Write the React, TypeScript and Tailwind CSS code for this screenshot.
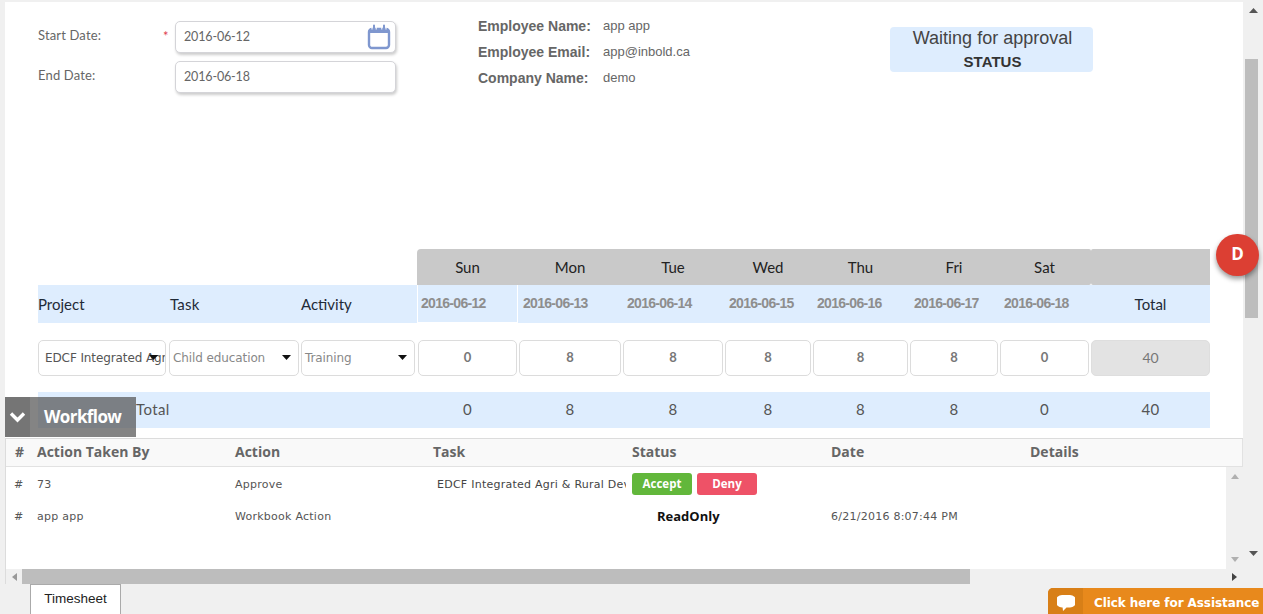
import React from "react";

const cols = "w-[1172px] grid grid-cols-[131px_132px_117px_101px_104px_102px_88px_97px_90px_91px_119px]";
const wfCols = "grid grid-cols-[31px_198px_198px_199px_199px_199px_196px]";
const days = ["Sun", "Mon", "Tue", "Wed", "Thu", "Fri", "Sat"];
const dates = ["2016-06-12", "2016-06-13", "2016-06-14", "2016-06-15", "2016-06-16", "2016-06-17", "2016-06-18"];
const hours = ["0", "8", "8", "8", "8", "8", "0"];

function Caret({ className = "" }: { className?: string }) {
  return (
    <svg width="9" height="5" viewBox="0 0 9 5" className={className}>
      <path d="M0 0h9L4.5 5z" fill="#111" />
    </svg>
  );
}

function Select({ label, dark, w }: { label: string; dark?: boolean; w: string }) {
  return (
    <div className={`${w} h-9 relative flex items-center bg-white border border-[#dcdcdc] rounded-[5px] overflow-hidden`}>
      <span className={`whitespace-nowrap text-[12px] tracking-[-0.1px] font-['DejaVu_Sans',sans-serif] ${dark ? "pl-[6px] text-[#555]" : "pl-[3px] text-[#888]"}`}>
        {label}
      </span>
      <Caret className="absolute right-[7px] top-[14px]" />
    </div>
  );
}

function Calendar() {
  return (
    <svg width="24" height="26" viewBox="0 0 24 26" className="absolute right-[4px] top-[2px]">
      <rect x="2" y="5" width="20" height="19" rx="3" fill="#fff" stroke="#7f97cf" strokeWidth="2.4" />
      <path d="M2 6.5a2 2 0 0 1 2-2h16a2 2 0 0 1 2 2V9H2z" fill="#7f97cf" />
      <path d="M7 1.5v6M17 1.5v6" stroke="#7f97cf" strokeWidth="2" strokeLinecap="round" />
      <path d="M5 2.5v3M9.2 2.5v3M14.8 2.5v3M19 2.5v3" stroke="#fff" strokeWidth="1" />
    </svg>
  );
}

function DateInput({ value, icon }: { value: string; icon?: boolean }) {
  return (
    <div className="w-[221px] h-8 relative flex items-center pl-2 bg-white border border-[#d4d4d8] rounded-[5px] shadow-[1px_2px_3px_rgba(0,0,0,0.2)] text-[12.5px] tracking-[-0.15px] text-[#666] font-['Lato',sans-serif]">
      {value}
      {icon && <Calendar />}
    </div>
  );
}

function Info({ label, value }: { label: string; value: string }) {
  return (
    <div className="flex items-center h-[26px]">
      <span className="w-[125px] text-[14px] font-bold text-[#666] font-['Liberation_Sans',sans-serif]">{label}</span>
      <span className="text-[13px] text-[#666] font-['Liberation_Sans',sans-serif]">{value}</span>
    </div>
  );
}

export default function App() {
  return (
    <div className="relative w-[1263px] h-[614px] overflow-hidden bg-[#f0f0f0] font-['Lato',sans-serif]">
      <div className="flex h-[584px]">
        {/* main white panel */}
        <div className="ml-[5px] mt-[2px] w-[1238px] flex flex-col bg-white">
          {/* top form */}
          <div className="h-[247px] flex pt-[13px] shrink-0">
            <div className="w-[473px] pl-[33px] pt-[6px] flex flex-col gap-2">
              <div className="flex items-center">
                <span className="w-[125px] pb-[2px] text-[13px] text-[#666] tracking-[0.15px]">Start Date:</span>
                <span className="w-[12px] text-[13px] text-[#e0404f]">*</span>
                <DateInput value="2016-06-12" icon />
              </div>
              <div className="flex items-center">
                <span className="w-[137px] pb-[2px] text-[13px] text-[#666] tracking-[0.15px]">End Date:</span>
                <DateInput value="2016-06-18" />
              </div>
            </div>
            <div className="w-[412px] flex flex-col -mt-[2px]">
              <Info label="Employee Name:" value="app app" />
              <Info label="Employee Email:" value="app@inbold.ca" />
              <Info label="Company Name:" value="demo" />
            </div>
            <div className="w-[203px] h-[45px] mt-[12px] pl-[2px] bg-[#deedfe] rounded-[4px] flex flex-col items-center font-['Liberation_Sans',sans-serif]">
              <span className="text-[18px] leading-[23px] text-[#444]">Waiting for approval</span>
              <span className="text-[15px] leading-[23px] font-bold text-[#333]">STATUS</span>
            </div>
          </div>

          {/* timesheet */}
          <div className="pl-[33px] shrink-0">
            <div className={`${cols} h-9 text-[15px] text-[#222]`}>
              <div className="col-span-3" />
              {days.map((d) => (
                <div key={d} className={`bg-[#c9c9c9] flex items-center justify-center ${d === "Sun" ? "rounded-tl-[4px] -ml-[1px] pr-[1px]" : "pr-[2px]"} ${d === "Sat" ? "rounded-r-[2px]" : ""}`}>
                  {d}
                </div>
              ))}
              <div className="bg-[#c9c9c9] rounded-l-[2px]" />
            </div>
            <div className={`${cols} h-[38px] bg-[#deedfe] text-[15px] text-[#1f2a37] items-center`}>
              <div>Project</div>
              <div className="pl-[1px] tracking-[0.2px]">Task</div>
              <div>Activity</div>
              {dates.map((d, i) => (
                <div key={d} className={`h-full flex items-center pb-[1px] text-[14px] font-bold text-[#8e8e8e] tracking-[-0.7px] font-['Liberation_Sans',sans-serif] ${i === 0 ? "pl-[3px] -ml-[1px] border border-t-0 border-white w-[101px]" : "pl-[4px]"}`}>
                  {d}
                </div>
              ))}
              <div className="text-center">Total</div>
            </div>
            <div className={`${cols} h-9 mt-[17px] text-[13px]`}>
              <Select label="EDCF Integrated Agri & Rural Dev" dark w="w-[128px]" />
              <Select label="Child education" w="w-[130px]" />
              <Select label="Training" w="w-[114px]" />
              {hours.map((h, i) => (
                <div key={i} className="mr-[2px] flex items-center justify-center pb-[1px] bg-white border border-[#dcdcdc] rounded-[5px] text-[#777] font-bold">
                  {h}
                </div>
              ))}
              <div className="flex items-center justify-center pb-[1px] bg-[#e3e3e3] border border-[#dedede] rounded-[5px] text-[14px] text-[#777]">40</div>
            </div>
            <div className={`${cols} h-9 mt-[16px] pb-[1px] bg-[#deedfe] text-[15px] text-[#555] items-center tracking-[0.4px]`}>
              <div className="col-span-3 pl-[98px]">Total</div>
              {hours.map((h, i) => (
                <div key={i} className="text-center pr-[2px]">{h}</div>
              ))}
              <div className="text-center">40</div>
            </div>
          </div>

          {/* workflow grid */}
          <div className="mt-[10px] flex-1 flex flex-col min-h-0 border-t border-l border-[#dcdcdc]">
            <div className={`${wfCols} h-[28px] pb-[2px] items-center bg-[#f9f9f9] border-b border-[#e2e2e2] border-r text-[14px] font-bold text-[#666] font-['Open_Sans',sans-serif] shrink-0`}>
              <div className="pl-[9px]">#</div>
              <div>Action Taken By</div>
              <div>Action</div>
              <div>Task</div>
              <div>Status</div>
              <div>Date</div>
              <div>Details</div>
            </div>
            <div className="flex flex-1 min-h-0">
              <div className="flex-1 min-w-0 pt-[2px] text-[11px] tracking-[0.25px] text-[#555] font-['DejaVu_Sans',sans-serif]">
                <div className={`${wfCols} h-8 items-center`}>
                  <div className="pl-[8px]">#</div>
                  <div>73</div>
                  <div>Approve</div>
                  <div className="ml-[4px] mr-[6px] overflow-hidden whitespace-nowrap text-[#444]">EDCF Integrated Agri &amp; Rural Development</div>
                  <div className="flex gap-[5px] -mt-[3px]">
                    <button className="w-[60px] h-[22px] rounded-[3px] bg-[#62b73b] text-white font-bold text-[11.5px] tracking-normal font-['Open_Sans',sans-serif]">Accept</button>
                    <button className="w-[60px] h-[22px] rounded-[3px] bg-[#ee5267] text-white font-bold text-[11.5px] tracking-normal font-['Open_Sans',sans-serif]">Deny</button>
                  </div>
                  <div />
                  <div />
                </div>
                <div className={`${wfCols} h-8 items-center`}>
                  <div className="pl-[8px]">#</div>
                  <div>app app</div>
                  <div>Workbook Action</div>
                  <div />
                  <div className="pl-[25px] font-bold text-[13px] text-[#111] tracking-normal font-['Open_Sans',sans-serif]">ReadOnly</div>
                  <div>6/21/2016 8:07:44 PM</div>
                  <div />
                </div>
              </div>
              {/* inner vertical scrollbar */}
              <div className="w-[17px] bg-[#f0f0f0] flex flex-col items-center justify-between py-[7px] shrink-0">
                <svg width="8" height="5" viewBox="0 0 8 5"><path d="M4 0l4 5H0z" fill="#b0b0b0" /></svg>
                <svg width="8" height="5" viewBox="0 0 8 5"><path d="M4 5L0 0h8z" fill="#b0b0b0" /></svg>
              </div>
            </div>
            {/* inner horizontal scrollbar */}
            <div className="h-[15px] bg-[#f0f0f0] flex items-center shrink-0">
              <div className="w-[16px] flex justify-center">
                <svg width="5" height="8" viewBox="0 0 5 8"><path d="M0 4l5-4v8z" fill="#999" /></svg>
              </div>
              <div className="w-[948px] h-full bg-[#bdbdbd]" />
              <div className="flex-1" />
              <div className="w-[17px] flex justify-center">
                <svg width="5" height="8" viewBox="0 0 5 8"><path d="M5 4L0 0v8z" fill="#444" /></svg>
              </div>
            </div>
          </div>
        </div>

        {/* page scrollbar */}
        <div className="w-[20px] pl-[1px] flex flex-col">
          <div className="h-[59px] flex justify-center pt-[8px]">
            <svg width="9" height="5" viewBox="0 0 9 5"><path d="M4.5 0L9 5H0z" fill="#555" /></svg>
          </div>
          <div className="w-[13px] ml-[1px] h-[259px] bg-[#bdbdbd]" />
          <div className="flex justify-center mt-[233px]">
            <svg width="9" height="5" viewBox="0 0 9 5"><path d="M4.5 5L0 0h9z" fill="#555" /></svg>
          </div>
        </div>
      </div>

      {/* bottom tab */}
      <div className="pl-[30px]">
        <div className="w-[91px] h-[30px] bg-white border border-[#aaa] border-b-0 flex items-center justify-center text-[13.5px] text-[#222] font-['Liberation_Sans',sans-serif]">
          Timesheet
        </div>
      </div>

      {/* overlays */}
      <div className="absolute left-[5px] top-[397px] w-[131px] h-10 flex items-center bg-[rgba(85,85,85,0.72)] text-white font-bold text-[17px] font-['Open_Sans',sans-serif]">
        <div className="w-[25px] h-full bg-[rgba(60,60,60,0.2)] flex items-center justify-center shrink-0">
          <svg width="17" height="12" viewBox="0 0 17 12"><path d="M2 2.5l6.5 6.5L15 2.5" fill="none" stroke="#fff" strokeWidth="3.4" /></svg>
        </div>
        <span className="pl-[14px] tracking-[-0.6px]">Workflow</span>
      </div>

      <div className="absolute left-[1216px] top-[234px] w-[43px] h-[42px] rounded-full bg-[#dc3f33] shadow-[0_3px_5px_rgba(0,0,0,0.4)] flex items-center justify-center pb-[3px] text-white font-bold text-[17px] font-['Open_Sans',sans-serif]">
        D
      </div>

      <div className="absolute left-[1048px] top-[588px] w-[215px] h-[26px] rounded-tl-[5px] overflow-hidden bg-[#e8891c] flex items-center text-white font-bold text-[12px] tracking-[-0.08px] font-['DejaVu_Sans',sans-serif]">
        <div className="w-[35px] h-full bg-[#d87f17] flex items-center justify-center pt-[4px] shrink-0">
          <svg width="18" height="18" viewBox="0 0 18 18"><path d="M5 1h8a4.5 4.5 0 0 1 0 12.5H9.5L6 17l-.4-3.5H5A4.5 4.5 0 0 1 5 1z" fill="#fff" /></svg>
        </div>
        <span className="pl-[11px] pt-[4px] whitespace-nowrap">Click here for Assistance</span>
      </div>
    </div>
  );
}
